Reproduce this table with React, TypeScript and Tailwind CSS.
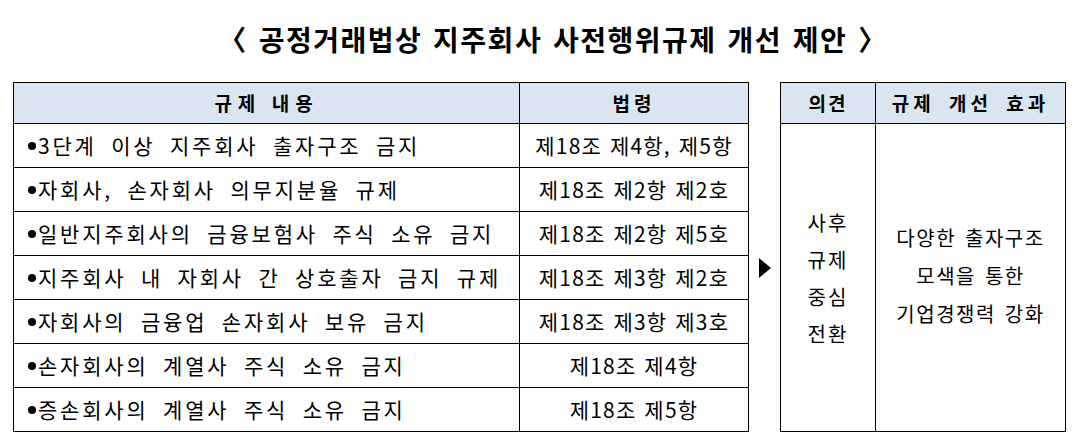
const rows = [
  ["3단계 이상 지주회사 출자구조 금지", "제18조 제4항, 제5항"],
  ["자회사, 손자회사 의무지분율 규제", "제18조 제2항 제2호"],
  ["일반지주회사의 금융보험사 주식 소유 금지", "제18조 제2항 제5호"],
  ["지주회사 내 자회사 간 상호출자 금지 규제", "제18조 제3항 제2호"],
  ["자회사의 금융업 손자회사 보유 금지", "제18조 제3항 제3호"],
  ["손자회사의 계열사 주식 소유 금지", "제18조 제4항"],
  ["증손회사의 계열사 주식 소유 금지", "제18조 제5항"],
];

export default function App() {
  return (
    <div className="h-[444px] w-[1086px] bg-white font-['Noto_Sans_CJK_KR',sans-serif] text-black">
      {/* Title */}
      <div className="pl-[20px] pt-[22px] text-center text-[28px] font-bold leading-[35px] tracking-[1.5px] [word-spacing:3px]">
        〈 공정거래법상 지주회사 사전행위규제 개선 제안 〉
      </div>

      <div className="mt-[25px] flex items-stretch pl-[13px]">
        {/* Left table */}
        <div className="w-[736px] border border-black">
          <div className="flex h-[41px] border-b border-black bg-[#dbe5f1] text-[19px] font-bold">
            <div className="flex w-[506px] items-center justify-center border-r border-black tracking-[6px]">
              규제 내용
            </div>
            <div className="flex flex-1 items-center justify-center tracking-[4px]">
              법령
            </div>
          </div>
          {rows.map(([text, law], i) => (
            <div
              key={i}
              className={`flex text-[21px] ${i < rows.length - 1 ? "h-[44px] border-b border-black" : "h-[43px]"}`}
            >
              <div className="flex w-[506px] items-center whitespace-nowrap border-r border-black pl-[14px] tracking-[2.8px] [word-spacing:7px]">
                <span className="mr-[2px] inline-block h-[8px] w-[8px] shrink-0 rounded-full bg-black" />
                {text}
              </div>
              <div className="flex flex-1 items-center justify-center whitespace-nowrap tracking-[1.2px] [word-spacing:2px]">
                {law}
              </div>
            </div>
          ))}
        </div>

        {/* Arrow */}
        <div className="flex w-[31px] items-center justify-center pt-[22px]">
          <svg width="12" height="20" viewBox="0 0 12 20">
            <polygon points="0,0 12,10 0,20" fill="black" />
          </svg>
        </div>

        {/* Right table */}
        <div className="flex w-[286px] flex-col border border-black">
          <div className="flex h-[41px] border-b border-black bg-[#dbe5f1] text-[19px] font-bold">
            <div className="flex w-[95px] items-center justify-center border-r border-black tracking-[2px]">
              의견
            </div>
            <div className="flex flex-1 items-center justify-center tracking-[4px] [word-spacing:6px]">
              규제 개선 효과
            </div>
          </div>
          <div className="flex flex-1 text-[20px]">
            <div className="flex w-[95px] flex-col items-center justify-center border-r border-black leading-[37px] tracking-[2px]">
              <span>사후</span>
              <span>규제</span>
              <span>중심</span>
              <span>전환</span>
            </div>
            <div className="flex flex-1 flex-col items-center justify-center pb-[4px] leading-[38px] tracking-[1.5px] [word-spacing:3px]">
              <span>다양한 출자구조</span>
              <span>모색을 통한</span>
              <span>기업경쟁력 강화</span>
            </div>
          </div>
        </div>
      </div>
    </div>
  );
}
